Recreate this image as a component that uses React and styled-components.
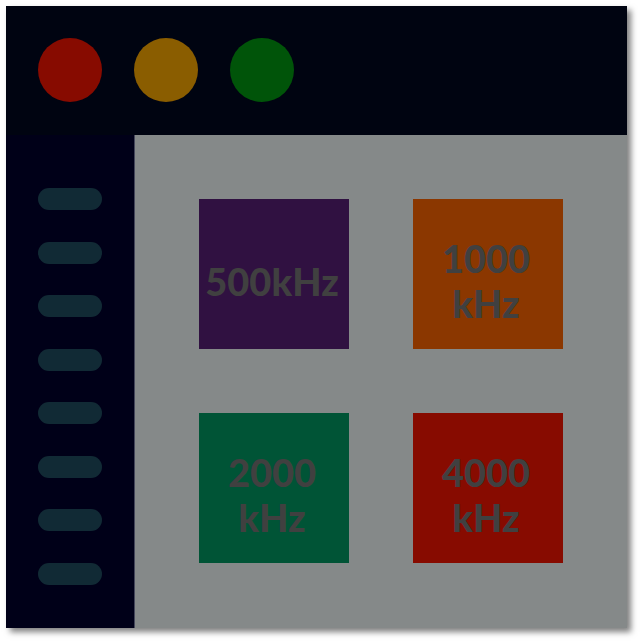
import React from "react";
import styled, { createGlobalStyle } from "styled-components";

const GlobalStyle = createGlobalStyle`
  *, *::before, *::after { box-sizing: border-box; }
  body { margin: 0; background: #ffffff; }
`;

const Page = styled.div`
  min-height: 100vh;
  display: flex;
  padding: 6px 14px 14px 6px;
`;

const Window = styled.div`
  flex: 1;
  display: flex;
  flex-direction: column;
  box-shadow: 4px 4px 6px rgba(0, 0, 0, 0.5);
`;

const TitleBar = styled.header`
  display: flex;
  gap: 32px;
  padding: 32px 32px 33px;
  background: #000411;
`;

const Light = styled.span`
  width: 64px;
  height: 64px;
  border-radius: 50%;
  background: ${(p) => p.$color};
`;

const Body = styled.div`
  flex: 1;
  display: flex;
`;

const Sidebar = styled.aside`
  flex: none;
  display: flex;
  flex-direction: column;
  justify-content: space-between;
  padding: 53px 32px 43px;
  background: #000018;
  border-right: 1px solid #44465a;
`;

const Pill = styled.span`
  width: 64px;
  height: 22px;
  border-radius: 11px;
  background: #112a35;
`;

const Content = styled.main`
  flex: 1;
  display: grid;
  grid-template-columns: 1fr 1fr;
  gap: 64px;
  align-content: start;
  padding: 64px;
  background: #858989;
`;

const Tile = styled.section`
  aspect-ratio: 1;
  display: flex;
  align-items: center;
  justify-content: center;
  padding: 14px 4px 0 0;
  background: ${(p) => p.$color};
  color: #404040;
  font: 900 38px/45px Lato, "Open Sans", sans-serif;
  text-align: center;
`;

const lights = ["#870b00", "#8a5d00", "#005409"];
const tiles = [
  { color: "#301141", lines: ["500kHz"] },
  { color: "#8b3700", lines: ["1000", "kHz"] },
  { color: "#005436", lines: ["2000", "kHz"] },
  { color: "#870b00", lines: ["4000", "kHz"] },
];

export default function App() {
  return (
    <>
      <GlobalStyle />
      <Page>
        <Window>
          <TitleBar>
            {lights.map((color) => (
              <Light key={color} $color={color} />
            ))}
          </TitleBar>
          <Body>
            <Sidebar>
              {Array.from({ length: 8 }, (_, i) => (
                <Pill key={i} />
              ))}
            </Sidebar>
            <Content>
              {tiles.map(({ color, lines }) => (
                <Tile key={lines[0]} $color={color}>
                  <span>
                    {lines[0]}
                    {lines[1] && <br />}
                    {lines[1]}
                  </span>
                </Tile>
              ))}
            </Content>
          </Body>
        </Window>
      </Page>
    </>
  );
}
